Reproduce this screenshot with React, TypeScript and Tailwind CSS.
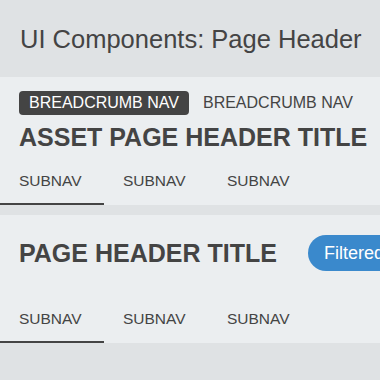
import React, { useState } from 'react';

const font = { fontFamily: '"Liberation Sans", Arial, sans-serif' };

const SubNav: React.FC = () => {
  const [active, setActive] = useState(0);
  const tabs = ['SUBNAV', 'SUBNAV', 'SUBNAV'];
  return (
    <div className="flex">
      {tabs.map((t, i) => (
        <button
          key={i}
          onClick={() => setActive(i)}
          className={`w-[104px] pl-[19px] pb-[13px] text-left text-[15.5px] leading-[18px] text-[#444] border-b-2 ${
            active === i ? 'border-[#444]' : 'border-transparent'
          }`}
        >
          {t}
        </button>
      ))}
    </div>
  );
};

const App: React.FC = () => {
  return (
    <div className="w-[380px] h-[380px] overflow-hidden bg-[#dfe2e4]" style={font}>
      <div className="h-[77px] flex items-center px-[20px]">
        <h1 className="text-[25.5px] leading-[30px] text-[#444] whitespace-nowrap">UI Components: Page Header</h1>
      </div>

      <div className="bg-[#ebeef0] pt-[14px]">
        <div className="flex items-center gap-[4px] px-[19px]">
          <span className="h-[24px] flex items-center px-[10px] rounded-[4px] bg-[#444] text-white text-[16px] whitespace-nowrap">
            BREADCRUMB NAV
          </span>
          <span className="h-[24px] flex items-center px-[10px] text-[#444] text-[16px] whitespace-nowrap">
            BREADCRUMB NAV
          </span>
        </div>
        <h2 className="mt-[8px] px-[19px] text-[25px] leading-[28px] font-bold text-[#444] whitespace-nowrap">
          ASSET PAGE HEADER TITLE
        </h2>
        <div className="mt-[21px]">
          <SubNav />
        </div>
      </div>

      <div className="mt-[10px] bg-[#ebeef0] pt-[20px]">
        <div className="flex items-center gap-[31px] px-[19px] h-[36px]">
          <h2 className="text-[25px] leading-[28px] font-bold text-[#444] whitespace-nowrap">PAGE HEADER TITLE</h2>
          <span className="h-[36px] flex items-center px-[16px] rounded-full bg-[#3a89cc] text-white text-[18px] whitespace-nowrap">
            Filtered View
          </span>
        </div>
        <div className="mt-[39px]">
          <SubNav />
        </div>
      </div>
    </div>
  );
};

export default App;
